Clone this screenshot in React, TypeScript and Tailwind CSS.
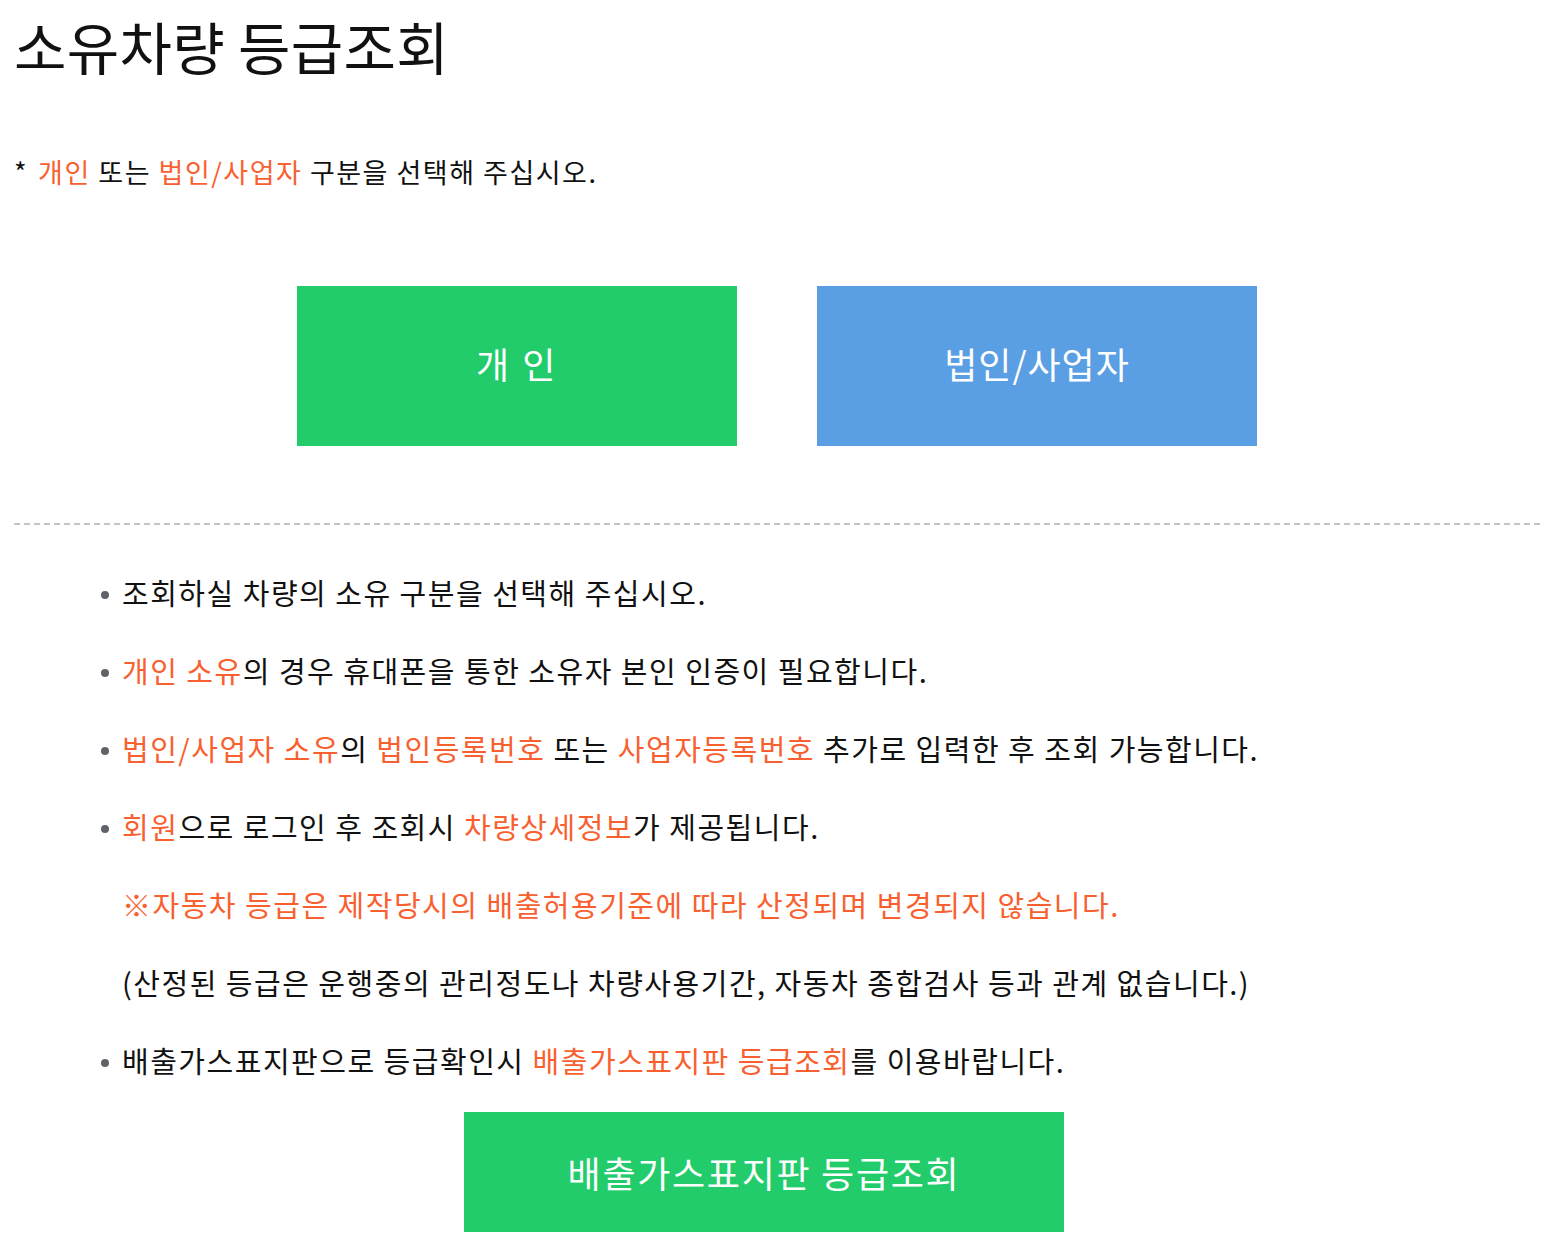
const font = { fontFamily: '"Noto Sans CJK KR", "Noto Sans", sans-serif' };

function Hl({ children }: { children: React.ReactNode }) {
    return <span className="text-[#f9602f]">{children}</span>;
}

function Item({ children, bullet = true }: { children: React.ReactNode; bullet?: boolean }) {
    return (
        <li className="h-[78px] flex items-center">
            <span className={`shrink-0 w-[8px] h-[8px] rounded-full mr-[13px] mt-[3px] ${bullet ? 'bg-[#5f6368]' : 'bg-transparent'}`}></span>
            <span>{children}</span>
        </li>
    );
}

export default function App() {
    return (
        <div className="w-[1552px] min-h-[1254px] bg-white text-[#111] pl-[14px] pr-[12px]" style={font}>
            <h1 className="h-[90px] flex items-center text-[57px] tracking-[0.3px] font-normal leading-none">
                소유차량 등급조회
            </h1>

            <p className="mt-[62px] h-[40px] flex items-center text-[27px] tracking-[1.5px]">
                <span className="mr-[10px]">*</span>
                <Hl>개인</Hl>&nbsp;또는&nbsp;<Hl>법인/사업자</Hl>&nbsp;구분을 선택해 주십시오.
            </p>

            <div className="mt-[94px] flex justify-center gap-[80px]">
                <button type="button" className="w-[440px] h-[160px] pb-[6px] bg-[#22cc6b] text-white text-[36px] tracking-[2.5px]">
                    개 인
                </button>
                <button type="button" className="w-[440px] h-[160px] pb-[6px] bg-[#5a9ee3] text-white text-[36px] tracking-[1px]">
                    법인/사업자
                </button>
            </div>

            <div className="mt-[77px] border-t-2 border-dashed border-[#c4c4c4]"></div>

            <ul className="mt-[29px] pl-[87px] text-[29px] tracking-[1.5px]">
                <Item>조회하실 차량의 소유 구분을 선택해 주십시오.</Item>
                <Item>
                    <Hl>개인 소유</Hl>의 경우 휴대폰을 통한 소유자 본인 인증이 필요합니다.
                </Item>
                <Item>
                    <Hl>법인/사업자 소유</Hl>의 <Hl>법인등록번호</Hl> 또는 <Hl>사업자등록번호</Hl> 추가로 입력한 후 조회 가능합니다.
                </Item>
                <Item>
                    <Hl>회원</Hl>으로 로그인 후 조회시 <Hl>차량상세정보</Hl>가 제공됩니다.
                </Item>
                <Item bullet={false}>
                    <Hl>※자동차 등급은 제작당시의 배출허용기준에 따라 산정되며 변경되지 않습니다.</Hl>
                </Item>
                <Item bullet={false}>
                    (산정된 등급은 운행중의 관리정도나 차량사용기간, 자동차 종합검사 등과 관계 없습니다.)
                </Item>
                <Item>
                    배출가스표지판으로 등급확인시 <Hl>배출가스표지판 등급조회</Hl>를 이용바랍니다.
                </Item>
            </ul>

            <button type="button" className="mt-[12px] ml-[450px] w-[600px] h-[120px] bg-[#22cc6b] text-white text-[36px] tracking-[1.7px]">
                배출가스표지판 등급조회
            </button>
        </div>
    );
}
